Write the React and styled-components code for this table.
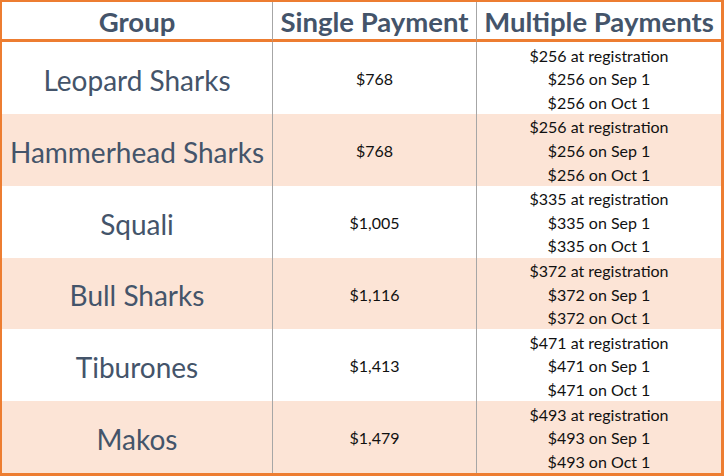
import React from 'react';
import styled, { createGlobalStyle } from 'styled-components';

const GlobalStyle = createGlobalStyle`
  html, body {
    margin: 0;
    padding: 0;
    background: #ffffff;
  }
`;

const $orange = '#ed7d31';
const $peach = '#fce4d6';
const $slate = '#44546a';
const $grid = '#a6a6a6';

const Table = styled.div`
  width: 724px;
  height: 476px;
  box-sizing: border-box;
  border-style: solid;
  border-color: ${$orange};
  border-width: 2px 3px 3px 2px;
  display: grid;
  grid-template-columns: 270px 204px 1fr;
  grid-template-rows: 40px repeat(6, 1fr);
  background: #ffffff;
`;

const HeadCell = styled.div`
  display: flex;
  align-items: center;
  justify-content: center;
  padding-top: 2px;
  border-bottom: 3px solid ${$orange};
  border-left: ${(p) => (p.first ? 'none' : `1px solid ${$grid}`)};
  font-family: Lato, 'Open Sans', sans-serif;
  font-weight: 700;
  font-size: 27.5px;
  color: ${$slate};
  white-space: nowrap;
  overflow: hidden;
`;

const Cell = styled.div`
  display: flex;
  flex-direction: column;
  align-items: center;
  justify-content: center;
  padding-top: ${(p) => (p.first ? '4px' : '2px')};
  background: ${(p) => (p.shaded ? $peach : '#ffffff')};
  border-left: ${(p) => (p.first ? 'none' : `1px solid ${$grid}`)};
  white-space: nowrap;
  overflow: hidden;
`;

const GroupName = styled.span`
  font-family: Lato, 'Open Sans', sans-serif;
  font-size: 28px;
  color: ${$slate};
`;

const Amount = styled.span`
  font-family: Lato, 'Open Sans', sans-serif;
  font-size: 16px;
  color: #111111;
  line-height: 23.6px;
`;

const ROWS = [
  { group: 'Leopard Sharks', single: '$768', part: '$256' },
  { group: 'Hammerhead Sharks', single: '$768', part: '$256' },
  { group: 'Squali', single: '$1,005', part: '$335' },
  { group: 'Bull Sharks', single: '$1,116', part: '$372' },
  { group: 'Tiburones', single: '$1,413', part: '$471' },
  { group: 'Makos', single: '$1,479', part: '$493' },
];

const App = () => (
  <>
    <GlobalStyle />
    <Table>
      <HeadCell first>Group</HeadCell>
      <HeadCell>Single Payment</HeadCell>
      <HeadCell>Multiple Payments</HeadCell>
      {ROWS.map((row, i) => {
        const shaded = i % 2 === 1;
        return (
          <React.Fragment key={row.group}>
            <Cell first shaded={shaded}>
              <GroupName>{row.group}</GroupName>
            </Cell>
            <Cell shaded={shaded}>
              <Amount>{row.single}</Amount>
            </Cell>
            <Cell shaded={shaded}>
              <Amount>{row.part} at registration</Amount>
              <Amount>{row.part} on Sep 1</Amount>
              <Amount>{row.part} on Oct 1</Amount>
            </Cell>
          </React.Fragment>
        );
      })}
    </Table>
  </>
);

export default App;
